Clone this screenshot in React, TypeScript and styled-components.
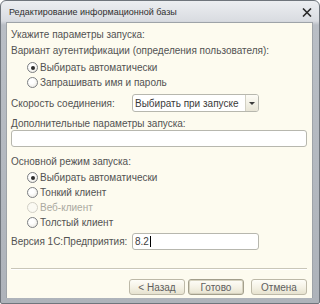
import React from "react";
import styled, { createGlobalStyle } from "styled-components";

const Global = createGlobalStyle`
  html, body { margin: 0; padding: 0; background: #ffffff; }
  body { font-family: "Liberation Sans", Arial, sans-serif; }
`;

const Window = styled.div`
  width: 320px;
  height: 304px;
  box-sizing: border-box;
  display: flex;
  flex-direction: column;
  padding: 0 6px 5px 5px;
  border: 1px solid #6f757c;
  border-radius: 6px 6px 2px 2px;
  background: linear-gradient(to bottom, #eceef1 0px, #d9dce1 20px, #b9bec5 24px, #aeb3ba 100%);
`;

const TitleBar = styled.div`
  height: 21px;
  flex: 0 0 21px;
  display: flex;
  align-items: center;
  justify-content: space-between;
  padding: 0 1px 0 3px;
  font-size: 9px;
  color: #2f2f2f;
`;

const CloseIcon = styled.svg`
  width: 10px;
  height: 9px;
  margin-top: 1px;
`;

const Content = styled.div`
  flex: 1;
  display: flex;
  flex-direction: column;
  background: #fdfbef;
  padding: 4px 4px 0 4px;
  color: #525252;
  font-size: 10px;
  border: 1px solid #9ea3a8;
  border-bottom: none;
`;

const Label = styled.div<{ $h?: number; $mt?: number; $muted?: boolean }>`
  height: ${(p) => p.$h ?? 15}px;
  line-height: ${(p) => p.$h ?? 15}px;
  margin-top: ${(p) => p.$mt ?? 0}px;
  white-space: nowrap;
  color: ${(p) => (p.$muted ? "#aaa99f" : "inherit")};
`;

const RadioGroup = styled.div<{ $mt: number }>`
  display: flex;
  flex-direction: column;
  padding-left: 16px;
  margin-top: ${(p) => p.$mt}px;
`;

const RadioRow = styled.div`
  height: 15px;
  display: flex;
  align-items: center;
  gap: 2px;
  white-space: nowrap;
`;

const RadioDot = styled.span<{ $checked?: boolean; $disabled?: boolean }>`
  width: 11px;
  height: 11px;
  box-sizing: border-box;
  border-radius: 50%;
  border: 1px solid ${(p) => (p.$disabled ? "#d2d0c6" : "#7c7f83")};
  background: ${(p) =>
    p.$disabled ? "#fbfaf3" : "radial-gradient(circle at 40% 35%, #ffffff 30%, #e6e4dc 100%)"};
  display: flex;
  align-items: center;
  justify-content: center;
  &::after {
    content: "";
    width: 4px;
    height: 4px;
    border-radius: 50%;
    background: #2c2c2c;
    display: ${(p) => (p.$checked ? "block" : "none")};
  }
`;

const FieldRow = styled.div<{ $mt: number }>`
  display: flex;
  align-items: center;
  margin-top: ${(p) => p.$mt}px;
`;

const FieldLabel = styled.div`
  width: 121px;
  white-space: nowrap;
`;

const TextBox = styled.div<{ $w?: number }>`
  box-sizing: border-box;
  width: ${(p) => (p.$w ? `${p.$w}px` : "auto")};
  height: 17px;
  border: 1px solid #b7b7ae;
  border-radius: 3px;
  background: #ffffff;
  display: flex;
  align-items: center;
  padding-left: 2px;
  color: #3e3e3e;
  white-space: nowrap;
`;

const Caret = styled.span`
  display: inline-block;
  width: 1px;
  height: 11px;
  background: #000;
  margin-left: 1px;
`;

const Select = styled(TextBox)`
  height: 18px;
  padding-right: 0;
  justify-content: space-between;
  color: #3a3a3a;
`;

const DropButton = styled.div`
  width: 12px;
  height: 16px;
  border-left: 1px solid #d2d0c4;
  border-radius: 0 2px 2px 0;
  background: linear-gradient(to bottom, #fdfcf6, #e8e5d6);
  display: flex;
  align-items: center;
  justify-content: center;
  &::after {
    content: "";
    border-left: 3px solid transparent;
    border-right: 3px solid transparent;
    border-top: 3px solid #3a3a3a;
  }
`;

const Separator = styled.div`
  height: 0;
  border-top: 1px solid #c9c6b8;
  border-bottom: 1px solid #ffffff;
  margin-top: 18px;
  margin-right: 1px;
`;

const ButtonBar = styled.div`
  display: flex;
  justify-content: flex-end;
  gap: 3px;
  margin-top: 9px;
  padding-right: 1px;
`;

const Button = styled.div<{ $default?: boolean; $ml?: number }>`
  box-sizing: border-box;
  width: 56px;
  height: 16px;
  margin-left: ${(p) => p.$ml ?? 0}px;
  border: 1px solid ${(p) => (p.$default ? "#a39f8c" : "#bdb9a8")};
  border-radius: 3px;
  background: linear-gradient(to bottom, #fefdf8 0%, #f4f1e4 55%, #e6e2cf 100%);
  box-shadow: ${(p) => (p.$default ? "inset 0 0 0 1px #d6d2bf" : "none")};
  display: flex;
  align-items: center;
  justify-content: center;
  color: #5e5e5e;
  font-size: 10px;
`;

export default function App() {
  return (
    <>
      <Global />
      <Window>
        <TitleBar>
          <span>Редактирование информационной базы</span>
          <CloseIcon viewBox="0 0 10 9">
            <path d="M1 0.5 L9 8.5 M9 0.5 L1 8.5" stroke="#2a2a2a" strokeWidth="1.6" />
          </CloseIcon>
        </TitleBar>
        <Content>
          <Label>Укажите параметры запуска:</Label>
          <Label $mt={1}>Вариант аутентификации (определения пользователя):</Label>
          <RadioGroup $mt={2}>
            <RadioRow>
              <RadioDot $checked />
              Выбирать автоматически
            </RadioRow>
            <RadioRow>
              <RadioDot />
              Запрашивать имя и пароль
            </RadioRow>
          </RadioGroup>
          <FieldRow $mt={4}>
            <FieldLabel>Скорость соединения:</FieldLabel>
            <Select $w={127}>
              <span>Выбирать при запуске</span>
              <DropButton />
            </Select>
          </FieldRow>
          <Label $h={13} $mt={5}>Дополнительные параметры запуска:</Label>
          <TextBox style={{ marginRight: 1 }} />
          <Label $h={14} $mt={8}>Основной режим запуска:</Label>
          <RadioGroup $mt={1}>
            <RadioRow>
              <RadioDot $checked />
              Выбирать автоматически
            </RadioRow>
            <RadioRow>
              <RadioDot />
              Тонкий клиент
            </RadioRow>
            <RadioRow>
              <RadioDot $disabled />
              <Label $muted>Веб-клиент</Label>
            </RadioRow>
            <RadioRow>
              <RadioDot />
              Толстый клиент
            </RadioRow>
          </RadioGroup>
          <FieldRow $mt={3}>
            <FieldLabel>Версия 1С:Предприятия:</FieldLabel>
            <TextBox $w={127}>
              8.2
              <Caret />
            </TextBox>
          </FieldRow>
          <Separator />
          <ButtonBar>
            <Button>&lt; Назад</Button>
            <Button $default>Готово</Button>
            <Button $ml={4}>Отмена</Button>
          </ButtonBar>
        </Content>
      </Window>
    </>
  );
}
